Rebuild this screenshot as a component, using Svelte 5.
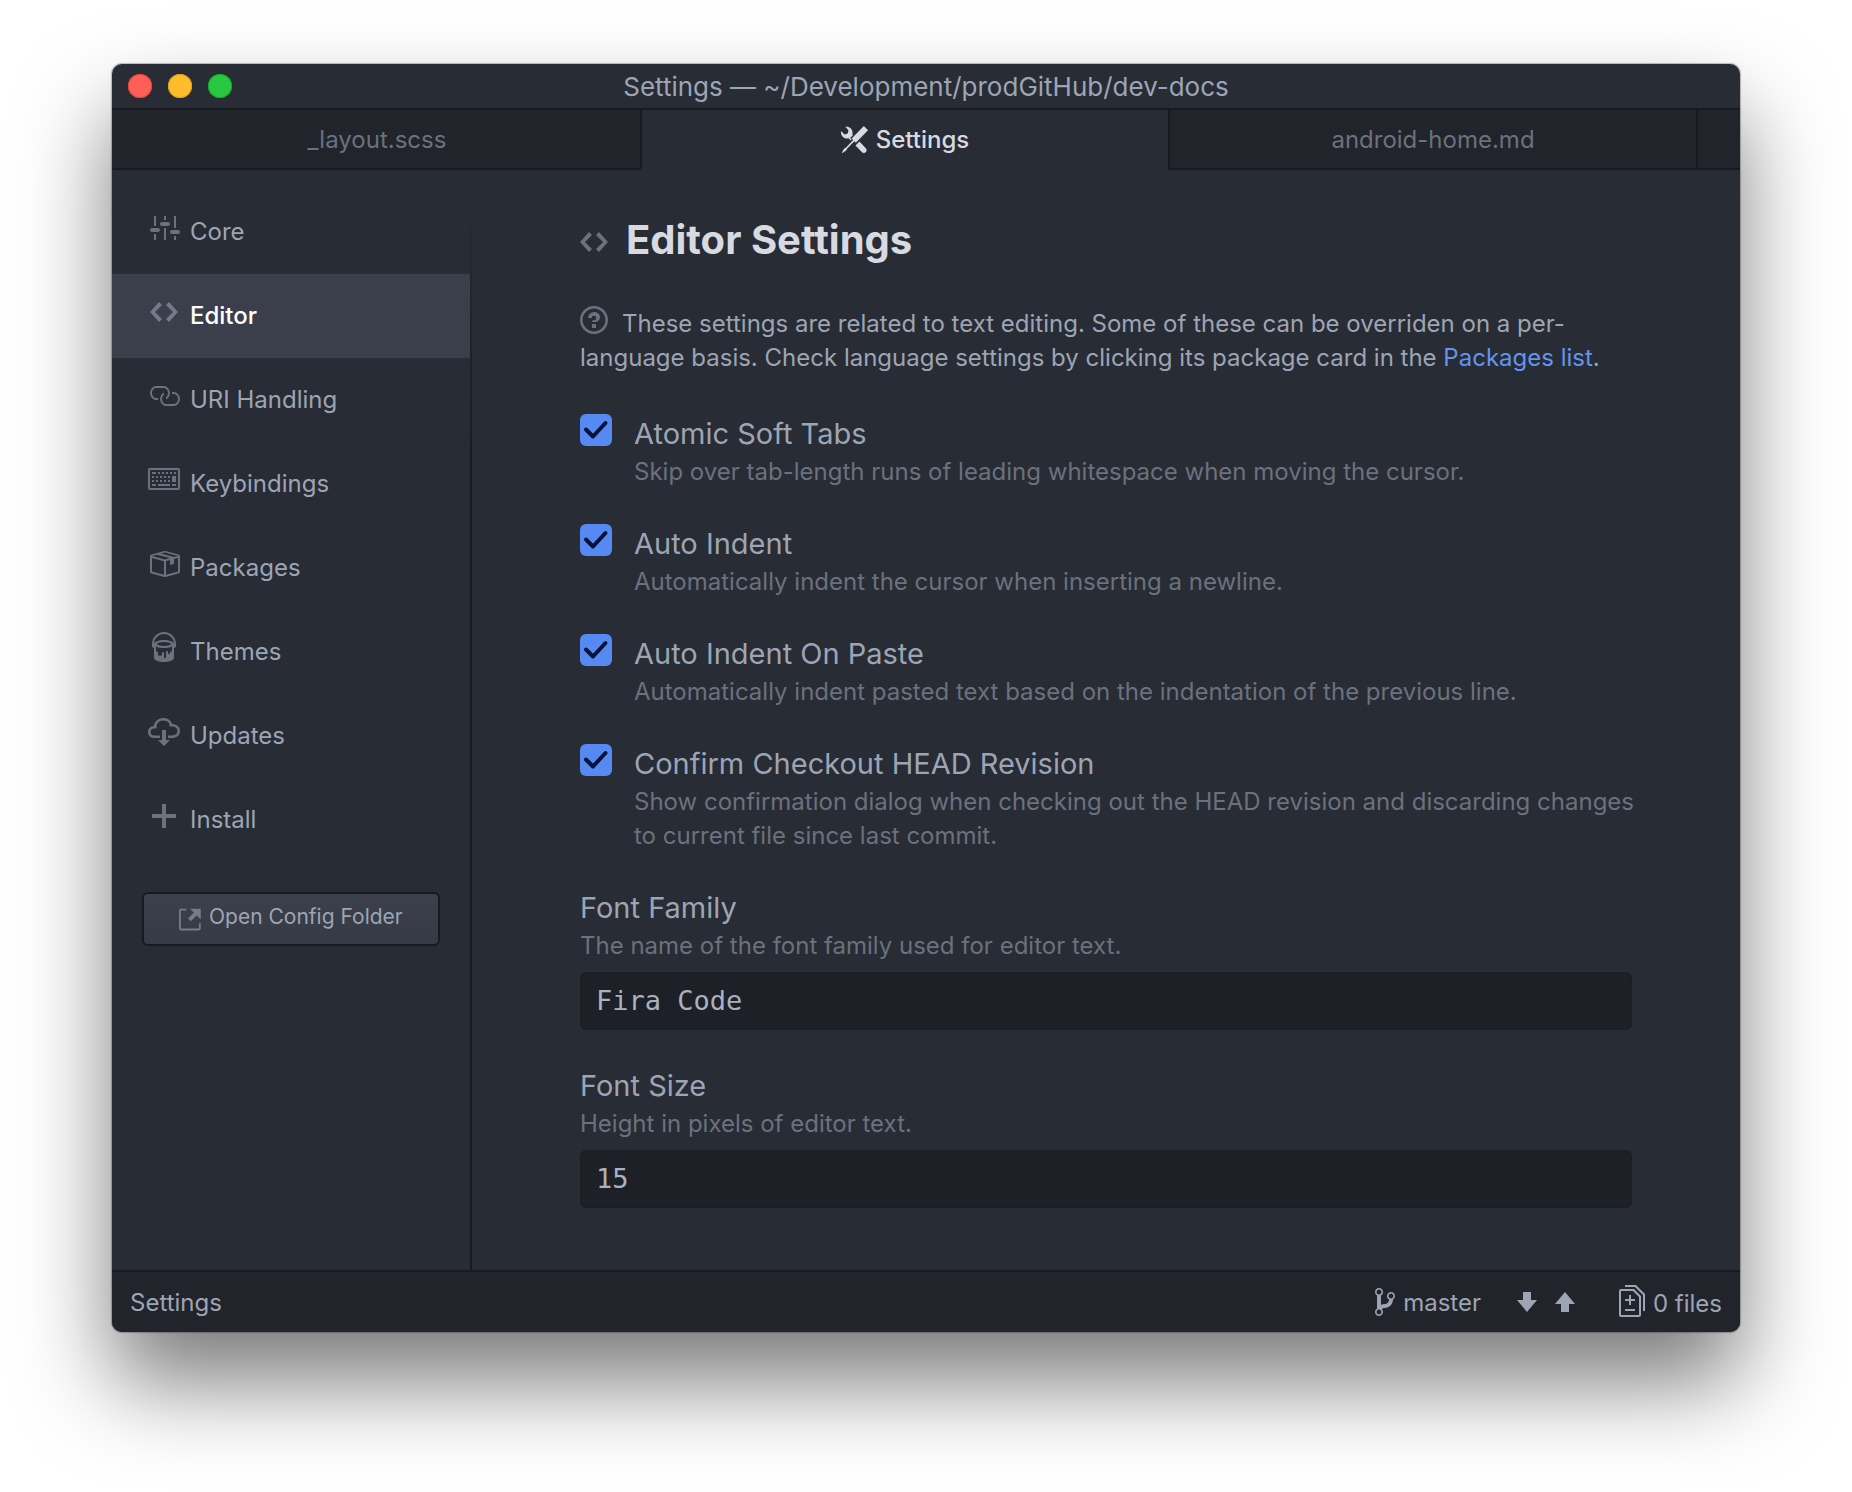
<script>
  const icons = {
    settings: { w: 16, d: 'M4 7H3V2h1v5zm-1 7h1v-3H3v3zm5 0h1V8H8v6zm5 0h1v-2h-1v2zm1-12h-1v6h1V2zM9 2H8v2h1V2zM5 8H2c-.55 0-1 .45-1 1 0 .55.45 1 1 1h3c.55 0 1-.45 1-1 0-.55-.45-1-1-1zm5-3H7c-.55 0-1 .45-1 1 0 .55.45 1 1 1h3c.55 0 1-.45 1-1 0-.55-.45-1-1-1zm5 4h-3c-.55 0-1 .45-1 1 0 .55.45 1 1 1h3c.55 0 1-.45 1-1 0-.55-.45-1-1-1z' },
    code: { w: 14, d: 'M9.5 3L8 4.5 11.5 8 8 11.5 9.5 13 14 8 9.5 3zm-5 0L0 8l4.5 5L6 11.5 2.5 8 6 4.5 4.5 3z' },
    link: { w: 16, d: 'M4 9h1v1H4c-1.5 0-3-1.69-3-3.5S2.55 3 4 3h4c1.45 0 3 1.69 3 3.5 0 1.41-.91 2.72-2 3.25V8.59c.58-.45 1-1.27 1-2.09C10 5.22 8.98 4 8 4H4c-.98 0-2 1.22-2 2.5S3 9 4 9zm9-3h-1v1h1c1 0 2 1.22 2 2.5S13.98 12 13 12H9c-.98 0-2-1.22-2-2.5 0-.83.42-1.64 1-2.09V6.25c-1.09.53-2 1.84-2 3.25C6 11.31 7.55 13 9 13h4c1.45 0 3-1.69 3-3.5S14.5 6 13 6z' },
    keyboard: { w: 16, d: 'M10 5H9V4h1v1zM3 6H2v1h1V6zm5-2H7v1h1V4zM4 4H2v1h2V4zm8 7h2v-1h-2v1zM8 7h1V6H8v1zm-4 3H2v1h2v-1zm8-6h-1v1h1V4zm2 0h-1v1h1V4zm-2 5h2V6h-2v3zm4-6v9c0 .55-.45 1-1 1H1c-.55 0-1-.45-1-1V3c0-.55.45-1 1-1h14c.55 0 1 .45 1 1zm-1 0H1v9h14V3zM6 7h1V6H6v1zm0-3H5v1h1V4zM4 7h1V6H4v1zm1 4h6v-1H5v1zm5-4h1V6h-1v1zM3 8H2v1h1V8zm5 0v1h1V8H8zM6 8v1h1V8H6zM5 8H4v1h1V8zm5 1h1V8h-1v1z' },
    package: { w: 16, d: 'M1 4.27v7.47c0 .45.3.84.75.97l6.5 1.73c.16.05.34.05.5 0l6.5-1.73c.45-.13.75-.52.75-.97V4.27c0-.45-.3-.84-.75-.97l-6.5-1.74a1.4 1.4 0 0 0-.5 0L1.75 3.3c-.45.13-.75.52-.75.97zm7 9.09l-6-1.59V5l6 1.61v6.75zM2 4l2.5-.67L11 5.06l-2.5.67L2 4zm13 7.77l-6 1.59V6.61l2-.55V8.5l2-.53V5.53L15 5v6.77zm-2-7.24L6.5 2.8l2-.53L15 4l-2 .53z' },
    paintcan: { w: 12, d: 'M6 0C2.69 0 0 2.69 0 6v1c0 .55.45 1 1 1v5c0 1.1 2.24 2 5 2s5-.9 5-2V8c.55 0 1-.45 1-1V6c0-3.31-2.69-6-6-6zm3 10v.5c0 .28-.22.5-.5.5s-.5-.22-.5-.5V10c0-.28-.22-.5-.5-.5s-.5.22-.5.5v2.5c0 .28-.22.5-.5.5s-.5-.22-.5-.5v-2c0-.28-.22-.5-.5-.5s-.5.22-.5.5v.5c0 .55-.45 1-1 1s-1-.45-1-1v-1c-.55 0-1-.45-1-1V7.2c.91.49 2.36.8 4 .8 1.64 0 3.09-.31 4-.8V9c0 .55-.45 1-1 1zM6 7c-1.68 0-3.12-.41-3.71-1C2.88 5.41 4.32 5 6 5c1.68 0 3.12.41 3.71 1-.59.59-2.03 1-3.71 1zm0-3c-2.76 0-5 .89-5 2 0-2.76 2.24-5 5-5s5 2.24 5 5c0-1.1-2.24-2-5-2z' },
    cloud: { w: 16, d: 'M9 12h2l-3 3-3-3h2V7h2v5zm3-8c0-.44-.91-3-4.5-3C5.08 1 3 2.92 3 5 1.02 5 0 6.52 0 8c0 1.53 1 3 3 3h3V9.7H3C1.38 9.7 1.3 8.28 1.3 8c0-.17.05-1.7 1.7-1.7h1.3V5c0-1.39 1.56-2.7 3.2-2.7 2.55 0 3.13 1.55 3.2 1.8v1.2H12c.81 0 2.7.22 2.7 2.2 0 2.09-2.25 2.2-2.7 2.2h-2V11h2c2.08 0 4-1.16 4-3.5C16 5.06 14.08 4 12 4z' },
    plus: { w: 12, d: 'M12 9H7v5H5V9H0V7h5V2h2v5h5z' },
    external: { w: 12, d: 'M11 10h1v3c0 .55-.45 1-1 1H1c-.55 0-1-.45-1-1V3c0-.55.45-1 1-1h3v1H1v10h10v-3zM6 2l2.25 2.25L5 7.5 6.5 9l3.25-3.25L12 8V2H6z' },
    question: { w: 14, d: 'M6 10h2v2H6v-2zm4-3.5C10 8.64 8 9 8 9H6c0-.55.45-1 1-1h.5c.28 0 .5-.22.5-.5v-1c0-.28-.22-.5-.5-.5h-1c-.28 0-.5.22-.5.5V7H4c0-1.5 1.5-3 3-3s3 1 3 2.5zM7 2.3c3.14 0 5.7 2.56 5.7 5.7s-2.56 5.7-5.7 5.7A5.71 5.71 0 0 1 1.3 8c0-3.14 2.56-5.7 5.7-5.7zM7 1C3.14 1 0 4.14 0 8s3.14 7 7 7 7-3.14 7-7-3.14-7-7-7z' },
    branch: { w: 10, d: 'M10 5c0-1.11-.89-2-2-2a1.993 1.993 0 0 0-1 3.72v.3c-.02.52-.23.98-.63 1.38-.4.4-.86.61-1.38.63-.83.02-1.48.16-2 .45V4.72a1.993 1.993 0 0 0-1-3.72C.88 1 0 1.89 0 3a2 2 0 0 0 1 1.72v6.56c-.59.35-1 .99-1 1.72 0 1.11.89 2 2 2 1.11 0 2-.89 2-2 0-.53-.2-1-.53-1.36.09-.06.48-.41.59-.47.25-.11.56-.17.94-.17 1.05-.05 1.95-.45 2.75-1.25S8.95 7.77 9 6.73h-.02C9.59 6.37 10 5.73 10 5zM2 1.8c.66 0 1.2.55 1.2 1.2 0 .65-.55 1.2-1.2 1.2C1.35 4.2.8 3.65.8 3c0-.65.55-1.2 1.2-1.2zm0 12.41c-.66 0-1.2-.55-1.2-1.2 0-.65.55-1.2 1.2-1.2.65 0 1.2.55 1.2 1.2 0 .65-.55 1.2-1.2 1.2zm6-8c-.66 0-1.2-.55-1.2-1.2 0-.65.55-1.2 1.2-1.2.65 0 1.2.55 1.2 1.2 0 .65-.55 1.2-1.2 1.2z' },
    down: { w: 10, d: 'M7 7V3H3v4H0l5 6 5-6z' },
    up: { w: 10, d: 'M5 3L0 9h3v4h4V9h3z' },
    tools: { w: 16, d: 'M4.48 7.27c.26.26 1.28 1.33 1.28 1.33l.56-.58-.88-.91 1.69-1.8s-.76-.74-.43-.45c.32-1.19.03-2.51-.87-3.44C4.93.5 3.66.2 2.52.51l1.93 2-.51 1.96-1.89.52-1.93-1.99C-.19 4.17.1 5.48 1 6.4c.94.98 2.29 1.26 3.48.87zm6.44 1.94l-2.33 2.3 3.84 3.98c.31.33.73.49 1.14.49.41 0 .82-.16 1.14-.49.63-.65.63-1.7 0-2.35l-3.79-3.93zM16 2.53L13.55 0 6.33 7.46l.88.91-4.31 4.46-.99.53-1.39 2.27.35.37 2.2-1.44.51-1.02L7.9 9.08l.88.91L16 2.53z' },
    diff: { w: 13, d: 'M6 7h2v1H6v2H5V8H3V7h2V5h1v2zm-3 6h5v-1H3v1zM7.5 2L11 5.5V15c0 .55-.45 1-1 1H1c-.55 0-1-.45-1-1V3c0-.55.45-1 1-1h6.5zM10 6L7 3H1v12h9V6zM8.5 0H3v1h5l4 4v8h1V4.5L8.5 0z' }
  };

  const sections = [
    { name: 'Core', icon: 'settings' },
    { name: 'Editor', icon: 'code' },
    { name: 'URI Handling', icon: 'link' },
    { name: 'Keybindings', icon: 'keyboard' },
    { name: 'Packages', icon: 'package' },
    { name: 'Themes', icon: 'paintcan' },
    { name: 'Updates', icon: 'cloud' },
    { name: 'Install', icon: 'plus' }
  ];
  let current = $state('Editor');

  let toggles = $state([
    { id: 'soft-tabs', title: 'Atomic Soft Tabs', text: 'Skip over tab-length runs of leading whitespace when moving the cursor.', on: true },
    { id: 'auto-indent', title: 'Auto Indent', text: 'Automatically indent the cursor when inserting a newline.', on: true },
    { id: 'indent-paste', title: 'Auto Indent On Paste', text: 'Automatically indent pasted text based on the indentation of the previous line.', on: true },
    { id: 'confirm-head', title: 'Confirm Checkout HEAD Revision', text: 'Show confirmation dialog when checking out the HEAD revision and discarding changes to current file since last commit.', on: true }
  ]);

  let fields = $state([
    { id: 'font-family', title: 'Font Family', text: 'The name of the font family used for editor text.', value: 'Fira Code' },
    { id: 'font-size', title: 'Font Size', text: 'Height in pixels of editor text.', value: '15' }
  ]);
</script>

{#snippet icon(name)}
  <svg class="icon {name}" viewBox="0 0 {icons[name].w} 16" aria-hidden="true"><path d={icons[name].d} /></svg>
{/snippet}

<div class="window">
  <header class="titlebar">
    <div class="lights">
      <button class="light close" aria-label="Close"></button>
      <button class="light minimize" aria-label="Minimize"></button>
      <button class="light zoom" aria-label="Zoom"></button>
    </div>
    <div class="title">Settings — ~/Development/prodGitHub/dev-docs</div>
  </header>

  <div class="tabs" role="tablist">
    <button class="tab" role="tab" aria-selected="false">_layout.scss</button>
    <button class="tab active" role="tab" aria-selected="true">{@render icon('tools')}Settings</button>
    <button class="tab" role="tab" aria-selected="false">android-home.md</button>
    <div class="rest"></div>
  </div>

  <div class="body">
    <aside>
      <nav>
        {#each sections as s}
          <button class="item" class:selected={current === s.name} onclick={() => (current = s.name)}>
            <span class="slot">{@render icon(s.icon)}</span><span class="name">{s.name}</span>
          </button>
        {/each}
      </nav>
      <button class="config">{@render icon('external')}<span>Open Config Folder</span></button>
    </aside>

    <main>
      <h1>{@render icon('code')}Editor Settings</h1>
      <p class="intro">
        {@render icon('question')}These settings are related to text editing. Some of these can be overriden on a per-language basis. Check language settings by clicking its package card in the <a href="#packages">Packages list</a>.
      </p>

      {#each toggles as t}
        <div class="setting toggle">
          <span class="box">
            <input type="checkbox" id={t.id} bind:checked={t.on} />
            <svg class="tick" viewBox="0 0 32 32" aria-hidden="true"><path d="M6 15.500L13 22.500L25.500 9" /></svg>
          </span>
          <div>
            <label for={t.id}>{t.title}</label>
            <div class="text">{t.text}</div>
          </div>
        </div>
      {/each}

      {#each fields as f}
        <div class="setting">
          <label for={f.id}>{f.title}</label>
          <div class="text">{f.text}</div>
          <input class="field" type="text" id={f.id} bind:value={f.value} spellcheck="false" />
        </div>
      {/each}
    </main>
  </div>

  <footer>
    <span class="where">Settings</span>
    <button class="status">{@render icon('branch')}master</button>
    <button class="status arrows" aria-label="Fetch and push">{@render icon('down')}{@render icon('up')}</button>
    <button class="status files">{@render icon('diff')}0 files</button>
  </footer>
</div>

<style>
  :global(body) {
    background: #fff;
  }

  .window {
    --line: #181a1f;
    --base: #282c34;
    --deep: #21242b;
    --text: #9da5b4;
    --subtle: #6b717d;
    margin: 64px 112px 160px;
    border-radius: 10px;
    overflow: hidden;
    background: var(--base);
    color: var(--text);
    font-family: Inter, "Liberation Sans", sans-serif;
    font-size: 24px;
    box-shadow:
      0 0 1px 1px rgba(0, 0, 0, 0.25),
      0 50px 90px rgba(0, 0, 0, 0.52);
  }

  button {
    border: 0;
    padding: 0;
    background: none;
    color: inherit;
    font: inherit;
  }

  .icon {
    height: 32px;
    flex: none;
    fill: currentColor;
  }

  .titlebar {
    display: grid;
    grid-template-columns: 1fr auto 1fr;
    align-items: center;
    height: 44px;
    padding: 0 16px;
    border-bottom: 2px solid var(--line);
    font-size: 26px;
  }

  .lights {
    display: flex;
    gap: 16px;
  }

  .light {
    width: 24px;
    height: 24px;
    border-radius: 50%;
  }

  .close {
    background: #ff5f57;
    box-shadow: inset 0 0 0 1px #e2463f;
  }

  .minimize {
    background: #ffbd2e;
    box-shadow: inset 0 0 0 1px #e1a116;
  }

  .zoom {
    background: #28c940;
    box-shadow: inset 0 0 0 1px #12ac28;
  }

  .tabs {
    display: grid;
    grid-template-columns: repeat(3, 1fr) 44px;
    height: 60px;
  }

  .tab,
  .rest {
    background: var(--deep);
    border-left: 2px solid var(--line);
    border-bottom: 2px solid var(--line);
  }

  .tab {
    display: flex;
    align-items: center;
    justify-content: center;
    gap: 8px;
    color: var(--subtle);
  }

  .tab:first-child {
    border-left-color: var(--deep);
  }

  .tab.active {
    background: var(--base);
    border-bottom-color: var(--base);
    color: #d7dae0;
    font-weight: 500;
  }

  .tools {
    height: 27px;
  }

  .body {
    display: flex;
  }

  aside {
    flex: none;
    width: 358px;
    padding: 20px 2px 0 0;
    background: linear-gradient(transparent 20px, var(--line) 320px) right / 2px 100% no-repeat;
  }

  .item {
    display: flex;
    align-items: center;
    gap: 10px;
    width: 100%;
    height: 84px;
    padding-left: 36px;
  }

  .slot {
    display: flex;
    justify-content: center;
    width: 32px;
    padding-bottom: 8px;
    color: var(--subtle);
  }

  .name {
    padding-bottom: 2px;
  }

  .selected {
    background: #3a3f4b;
    color: #fff;
    font-weight: 500;
  }

  .selected .slot {
    color: #737c8c;
  }

  .config {
    display: flex;
    align-items: center;
    justify-content: center;
    gap: 8px;
    width: 298px;
    height: 54px;
    margin: 30px 30px 0;
    border: 2px solid var(--line);
    border-radius: 6px;
    background: linear-gradient(#3c404b, #353a44);
    font-size: 21px;
  }

  .config span {
    padding-bottom: 5px;
  }

  .external {
    height: 29px;
    fill: #737c8c;
  }

  main {
    flex: 1;
    padding: 46px 108px 26px;
  }

  h1 {
    display: flex;
    align-items: center;
    gap: 18px;
    margin: 0 0 42px;
    color: #d7dae0;
    font-size: 40px;
    line-height: 48px;
  }

  h1 .icon,
  .intro .icon {
    fill: var(--subtle);
  }

  h1 .icon {
    margin-top: 4px;
  }

  .intro {
    margin: 0;
    padding: 1px 0 39px;
    line-height: 34px;
  }

  .intro .icon {
    height: 32px;
    margin: -8px 14px -4px 0;
  }

  a {
    color: #6494ed;
    text-decoration: none;
  }

  .setting {
    margin-bottom: 35px;
  }

  .toggle {
    display: flex;
    gap: 22px;
    margin-right: -16px;
  }

  .box {
    display: grid;
    flex: none;
    width: 32px;
    height: 32px;
  }

  .box > * {
    grid-area: 1 / 1;
  }

  .box input {
    appearance: none;
    margin: 0;
    border-radius: 6px;
    background: #3a3f4b;
  }

  .box input:checked {
    background: #568af2;
  }

  .tick {
    display: none;
    fill: none;
    stroke: #06133a;
    stroke-width: 4;
    stroke-linecap: round;
    stroke-linejoin: round;
    pointer-events: none;
  }

  .box input:checked + .tick {
    display: block;
  }

  label {
    display: block;
    margin-bottom: 2px;
    font-size: 29px;
    line-height: 39px;
  }

  .text {
    color: var(--subtle);
    line-height: 34px;
  }

  .field {
    display: block;
    box-sizing: border-box;
    width: 100%;
    height: 58px;
    margin: 9px 0 36px;
    padding: 0 14px 2px;
    border: 2px solid #1c1e23;
    border-radius: 6px;
    background: #1d2026;
    color: #abb2bf;
    font: 27px "DejaVu Sans Mono", monospace;
  }

  .setting:has(.field) {
    margin-bottom: 0;
  }

  footer {
    display: flex;
    align-items: center;
    height: 60px;
    padding: 0 18px;
    border-top: 2px solid var(--line);
    background: var(--deep);
  }

  .where {
    flex: 1;
  }

  .status {
    display: flex;
    align-items: center;
    gap: 8px;
  }

  .arrows {
    gap: 18px;
    margin: 0 44px 0 36px;
  }

  .files {
    padding-top: 2px;
  }

  .diff {
    margin-bottom: 4px;
  }
</style>
